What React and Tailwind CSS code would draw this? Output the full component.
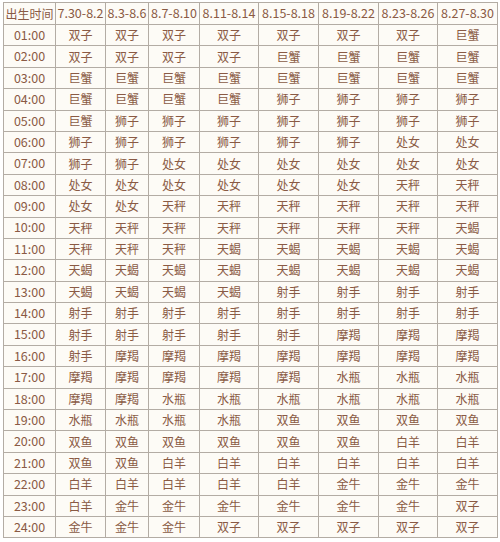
const ranges = ["7.30-8.2", "8.3-8.6", "8.7-8.10", "8.11-8.14", "8.15-8.18", "8.19-8.22", "8.23-8.26", "8.27-8.30"];

const widths = ["w-[52px]", "w-[50px]", "w-[43px]", "w-[51px]", "w-[59px]", "w-[60px]", "w-[60px]", "w-[59px]", "w-[60px]"];

const rows = [
  ["01:00", "双子 双子 双子 双子 双子 双子 双子 巨蟹"],
  ["02:00", "双子 双子 双子 双子 巨蟹 巨蟹 巨蟹 巨蟹"],
  ["03:00", "巨蟹 巨蟹 巨蟹 巨蟹 巨蟹 巨蟹 巨蟹 巨蟹"],
  ["04:00", "巨蟹 巨蟹 巨蟹 巨蟹 狮子 狮子 狮子 狮子"],
  ["05:00", "巨蟹 狮子 狮子 狮子 狮子 狮子 狮子 狮子"],
  ["06:00", "狮子 狮子 狮子 狮子 狮子 狮子 处女 处女"],
  ["07:00", "狮子 狮子 处女 处女 处女 处女 处女 处女"],
  ["08:00", "处女 处女 处女 处女 处女 处女 天秤 天秤"],
  ["09:00", "处女 处女 天秤 天秤 天秤 天秤 天秤 天秤"],
  ["10:00", "天秤 天秤 天秤 天秤 天秤 天秤 天秤 天蝎"],
  ["11:00", "天秤 天秤 天秤 天蝎 天蝎 天蝎 天蝎 天蝎"],
  ["12:00", "天蝎 天蝎 天蝎 天蝎 天蝎 天蝎 天蝎 天蝎"],
  ["13:00", "天蝎 天蝎 天蝎 天蝎 射手 射手 射手 射手"],
  ["14:00", "射手 射手 射手 射手 射手 射手 射手 射手"],
  ["15:00", "射手 射手 射手 射手 射手 摩羯 摩羯 摩羯"],
  ["16:00", "射手 摩羯 摩羯 摩羯 摩羯 摩羯 摩羯 摩羯"],
  ["17:00", "摩羯 摩羯 摩羯 摩羯 摩羯 水瓶 水瓶 水瓶"],
  ["18:00", "摩羯 摩羯 水瓶 水瓶 水瓶 水瓶 水瓶 水瓶"],
  ["19:00", "水瓶 水瓶 水瓶 水瓶 双鱼 双鱼 双鱼 双鱼"],
  ["20:00", "双鱼 双鱼 双鱼 双鱼 双鱼 双鱼 白羊 白羊"],
  ["21:00", "双鱼 双鱼 白羊 白羊 白羊 白羊 白羊 白羊"],
  ["22:00", "白羊 白羊 白羊 白羊 白羊 金牛 金牛 金牛"],
  ["23:00", "白羊 金牛 金牛 金牛 金牛 金牛 金牛 双子"],
  ["24:00", "金牛 金牛 金牛 双子 双子 双子 双子 双子"],
];

export default function App() {
  return (
    <div className="w-[500px] h-[542px] bg-white pt-[2px] pl-[3px] font-['Noto_Sans_CJK_SC','Noto_Sans',sans-serif]">
      <table className="table-fixed border-collapse w-[494px] bg-[#fdfbf6] text-[#8a5a44] text-[12px] border border-[#8c8c8c]">
        <colgroup>
          {widths.map((w, i) => (
            <col key={i} className={w} />
          ))}
        </colgroup>
        <thead>
          <tr className="h-[22px]">
            <th className="border border-[#b3aca4] font-normal text-center p-0 whitespace-nowrap">出生时间</th>
            {ranges.map((r) => (
              <th key={r} className="border border-[#b3aca4] font-normal text-center p-0 whitespace-nowrap text-[12.5px]">
                {r}
              </th>
            ))}
          </tr>
        </thead>
        <tbody>
          {rows.map(([time, signs]) => (
            <tr key={time} className="h-[21.4px]">
              <td className="border border-[#b3aca4] text-center p-0 leading-none text-[12.5px]">{time}</td>
              {signs.split(" ").map((s, i) => (
                <td key={i} className="border border-[#b3aca4] text-center p-0 leading-none">
                  {s}
                </td>
              ))}
            </tr>
          ))}
        </tbody>
      </table>
    </div>
  );
}
